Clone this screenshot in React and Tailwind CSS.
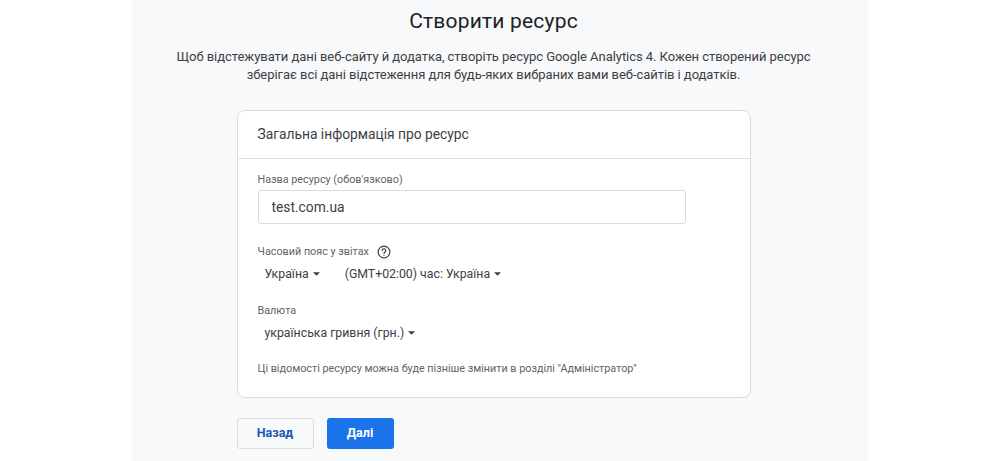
import { useState } from "react";

// Small dropdown label with a caret
function Select({ label, className = "" }) {
  return (
    <button className={`flex items-center text-[12.3px] text-[#3c4043] ${className}`}>
      <span>{label}</span>
      <svg viewBox="0 0 8 4" className="ml-[4px] w-[7px] h-[4px] fill-[#3c4043]">
        <path d="M0 0h8L4 4z" />
      </svg>
    </button>
  );
}

export default function App() {
  const [name, setName] = useState("test.com.ua");

  return (
    <div className="h-[461px] overflow-hidden bg-white font-['Roboto',sans-serif]">
      <div className="mx-auto w-[736px] h-full bg-[#f8f9fa] flex flex-col items-center pt-[8px] pr-[13px]">
        <h1 className="text-[21px] leading-[26px] text-[#202124] tracking-[0.2px]">Створити ресурс</h1>

        <p className="mt-[14px] w-[680px] text-center text-[13px] leading-[18px] text-[#3c4043] tracking-[-0.05px]">
          Щоб відстежувати дані веб-сайту й додатка, створіть ресурс Google Analytics 4. Кожен створений ресурс
          <br />
          зберігає всі дані відстеження для будь-яких вибраних вами веб-сайтів і додатків.
        </p>

        <div className="mt-[26px] w-[514px] h-[288px] bg-white border border-[#dadce0] rounded-[8px]">
          <div className="h-[48px] flex items-center px-[20px] border-b border-[#e0e0e0] text-[13.8px] text-[#3c4043]">
            Загальна інформація про ресурс
          </div>

          <div className="px-[20px] pt-[14px]">
            <label className="block text-[10.8px] leading-[14px] text-[#5f6368]">Назва ресурсу (обов'язково)</label>
            <input
              value={name}
              onChange={(e) => setName(e.target.value)}
              className="mt-[3px] block w-[428px] h-[34px] px-[13px] text-[13.8px] text-[#3c4043] bg-white border border-[#dadce0] rounded-[3px] outline-none"
            />

            <div className="mt-[21px] flex items-center text-[10.8px] leading-[14px] text-[#5f6368]">
              Часовий пояс у звітах
              <svg viewBox="0 0 24 24" className="ml-[8px] w-[14px] h-[14px] fill-none stroke-[#3c4043] stroke-2">
                <circle cx="12" cy="12" r="10" />
                <path d="M9 9.5a3 3 0 1 1 4.6 2.5c-1 .7-1.6 1.2-1.6 2.5" strokeLinecap="round" />
                <path d="M12 17v1.5" />
              </svg>
            </div>
            <div className="mt-[5px] flex items-center pl-[7px] h-[20px]">
              <Select label="Україна" />
              <Select label="(GMT+02:00) час: Україна" className="ml-[25px]" />
            </div>

            <div className="mt-[20px] text-[10.8px] leading-[14px] text-[#5f6368]">Валюта</div>
            <div className="mt-[5px] flex items-center pl-[7px] h-[20px]">
              <Select label="українська гривня (грн.)" />
            </div>

            <p className="mt-[19px] text-[10.8px] leading-[14px] text-[#5f6368]">
              Ці відомості ресурсу можна буде пізніше змінити в розділі "Адміністратор"
            </p>
          </div>
        </div>

        <div className="mt-[20px] w-[514px] flex gap-[13px]">
          <button className="w-[77px] h-[31px] border border-[#dadce0] rounded-[3px] text-[12.5px] font-bold text-[#1a56b8] bg-[#f8f9fa]">
            Назад
          </button>
          <button className="w-[67px] h-[31px] rounded-[3px] text-[12.5px] font-bold text-white bg-[#1a73e8]">
            Далі
          </button>
        </div>
      </div>
    </div>
  );
}
